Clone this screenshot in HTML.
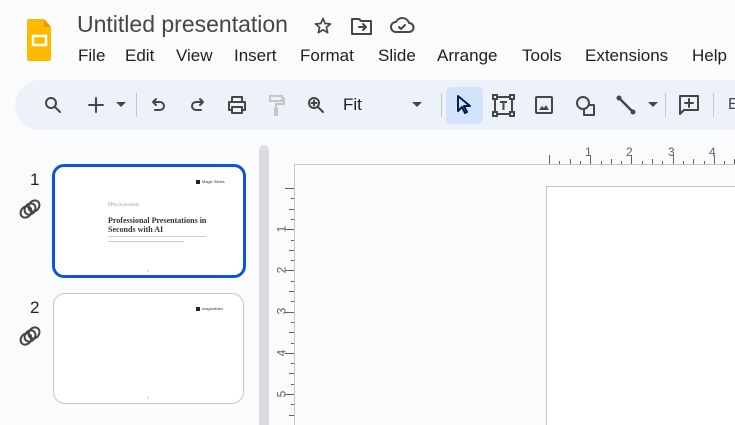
<!DOCTYPE html>
<html><head><meta charset="utf-8"><style>
*{margin:0;padding:0;box-sizing:border-box}
html{width:735px;height:425px;overflow:hidden}
body{width:735px;height:425px;overflow:hidden;background:#f9fbfd;font-family:"Liberation Sans",sans-serif;position:relative;color:#1f1f1f}
.a{position:absolute}
.menu span{position:absolute;top:46px;font-size:17px;color:#1f1f1f}
svg{position:absolute;overflow:visible}
.ic{fill:none;stroke:#444746;stroke-width:2;stroke-linecap:round;stroke-linejoin:round}
.tick{background:#5f6368;position:absolute}
.rn{position:absolute;font-size:12px;color:#5f6368}
.vr{position:absolute;font-size:12px;color:#5f6368;transform:rotate(-90deg)}
</style></head><body>
<svg style="left:27px;top:19px" width="24" height="42" viewBox="0 0 24 42">
<path d="M2 0h15l7 8v32a2 2 0 0 1-2 2H2a2 2 0 0 1-2-2V2a2 2 0 0 1 2-2z" fill="#ffba00"/>
<path d="M17 0v8h7z" fill="#f29900"/>
<rect x="6" y="17" width="13" height="9" fill="none" stroke="#fff" stroke-width="2.5"/>
</svg>
<div class="a" style="left:77px;top:11px;font-size:23px;color:#444746">Untitled presentation</div>
<svg style="left:313px;top:16px" width="20" height="20" viewBox="0 0 24 24"><path class="ic" d="M12 3l2.6 6 6.4.5-4.9 4.2 1.5 6.3L12 16.6 6.4 20l1.5-6.3L3 9.5l6.4-.5z"/></svg>
<svg style="left:351px;top:17px" width="22" height="18" viewBox="0 0 22 18"><path class="ic" d="M1 2h7l2 2h10v13H1z"/><path class="ic" d="M8 10h7M12 7l3 3-3 3"/></svg>
<svg style="left:390px;top:16px" width="24" height="18" viewBox="0 0 24 18"><path class="ic" d="M6 16a5 5 0 0 1 0-10 7 7 0 0 1 13 1 4.5 4.5 0 0 1 0 9z"/><path class="ic" d="M9 11l2 2 4-4"/></svg>
<div class="menu">
<span style="left:78px">File</span><span style="left:125px">Edit</span><span style="left:176px">View</span><span style="left:234px">Insert</span><span style="left:300px">Format</span><span style="left:378px">Slide</span><span style="left:437px">Arrange</span><span style="left:522px">Tools</span><span style="left:585px">Extensions</span><span style="left:692px">Help</span>
</div>
<div class="a" style="left:15px;top:80px;width:740px;height:50px;border-radius:25px;background:#edf2fa"></div>
<svg style="left:44px;top:96px" width="18" height="18" viewBox="0 0 18 18"><circle class="ic" cx="7" cy="7" r="5"/><path class="ic" d="M11 11l5 5"/></svg>
<svg style="left:88px;top:97px" width="16" height="16" viewBox="0 0 16 16"><path class="ic" d="M8 1v14M1 8h14"/></svg>
<svg style="left:116px;top:102px" width="10" height="6"><path d="M0 0h10L5 5z" fill="#444746"/></svg>
<div class="a" style="left:136px;top:93px;width:1px;height:24px;background:#c7c7c7"></div>
<svg style="left:150px;top:97px" width="16" height="16" viewBox="0 0 16 16"><path class="ic" d="M4 5h6a4 4 0 0 1 0 8H5M6 2L3 5l3 3"/></svg>
<svg style="left:190px;top:97px" width="16" height="16" viewBox="0 0 16 16"><path class="ic" d="M12 5H6a4 4 0 0 0 0 8h5M10 2l3 3-3 3"/></svg>
<svg style="left:227px;top:95px" width="20" height="20" viewBox="0 0 20 20"><path class="ic" d="M5 6V2h10v4M2 7h16v8h-3M5 15H2V7M5 12h10v6H5z"/></svg>
<svg style="left:268px;top:94px" width="18" height="24" viewBox="0 0 18 24"><path d="M2 2h12v5H2zM14 4h2v6H8v4" fill="none" stroke="#c4c7c5" stroke-width="2"/><rect x="6" y="14" width="4" height="8" fill="#c4c7c5"/></svg>
<svg style="left:307px;top:96px" width="18" height="18" viewBox="0 0 18 18"><circle class="ic" cx="7" cy="7" r="5"/><path class="ic" d="M11 11l5 5M7 4.5v5M4.5 7h5"/></svg>
<div class="a" style="left:343px;top:95px;font-size:17px;color:#1f1f1f">Fit</div>
<svg style="left:412px;top:102px" width="10" height="6"><path d="M0 0h10L5 5z" fill="#444746"/></svg>
<div class="a" style="left:441px;top:93px;width:1px;height:24px;background:#c7c7c7"></div>
<div class="a" style="left:446px;top:87px;width:37px;height:37px;border-radius:5px;background:#d3e3fd"></div>
<svg style="left:456px;top:95px" width="16" height="20" viewBox="0 0 16 20"><path d="M2 1v15l4-4 3 6 2-1-3-6h6z" fill="none" stroke="#041e49" stroke-width="2" stroke-linejoin="round"/></svg>
<svg style="left:492px;top:94px" width="23" height="23" viewBox="0 0 23 23"><g fill="none" stroke="#444746" stroke-width="2"><rect x="1" y="1" width="4" height="4"/><rect x="18" y="1" width="4" height="4"/><rect x="1" y="18" width="4" height="4"/><rect x="18" y="18" width="4" height="4"/><path d="M5 3h13M5 20h13M3 5v13M20 5v13M8 8h7M11.5 8v8"/></g></svg>
<svg style="left:535px;top:96px" width="18" height="18" viewBox="0 0 18 18"><rect class="ic" x="1" y="1" width="16" height="16" rx="1"/><path d="M4 14l3-4 2 2 2-3 3 5z" fill="#444746"/></svg>
<svg style="left:575px;top:95px" width="22" height="22" viewBox="0 0 22 22"><circle class="ic" cx="8" cy="8" r="6"/><path class="ic" d="M14 10h5v10h-10v-5"/></svg>
<svg style="left:616px;top:95px" width="20" height="20" viewBox="0 0 20 20"><path d="M3 3l14 14" stroke="#444746" stroke-width="2.5"/><circle cx="3" cy="3" r="2.5" fill="#444746"/><circle cx="17" cy="17" r="2.5" fill="#444746"/></svg>
<svg style="left:648px;top:102px" width="10" height="6"><path d="M0 0h10L5 5z" fill="#444746"/></svg>
<div class="a" style="left:665px;top:93px;width:1px;height:24px;background:#c7c7c7"></div>
<svg style="left:679px;top:95px" width="20" height="20" viewBox="0 0 20 20"><path class="ic" d="M1 1h18v14H5l-4 4zM10 4v8M6 8h8"/></svg>
<div class="a" style="left:713px;top:93px;width:1px;height:24px;background:#c7c7c7"></div>
<div class="a" style="left:728px;top:96px;font-size:16px;color:#444746">E</div>
<div class="a" style="left:30px;top:170px;font-size:17px;color:#1f1f1f">1</div>
<div class="a" style="left:30px;top:298px;font-size:17px;color:#1f1f1f">2</div>
<svg style="left:18px;top:198px" width="24" height="22" viewBox="0 0 24 22"><g fill="none" stroke="#444746" stroke-width="2"><ellipse cx="8" cy="14" rx="5" ry="6" transform="rotate(40 8 14)"/><ellipse cx="12" cy="11" rx="5" ry="6" transform="rotate(40 12 11)"/><ellipse cx="16" cy="8" rx="5" ry="6" transform="rotate(40 16 8)"/></g></svg>
<svg style="left:18px;top:325px" width="24" height="22" viewBox="0 0 24 22"><g fill="none" stroke="#444746" stroke-width="2"><ellipse cx="8" cy="14" rx="5" ry="6" transform="rotate(40 8 14)"/><ellipse cx="12" cy="11" rx="5" ry="6" transform="rotate(40 12 11)"/><ellipse cx="16" cy="8" rx="5" ry="6" transform="rotate(40 16 8)"/></g></svg>
<div class="a" style="left:52px;top:164px;width:194px;height:114px;border:3px solid #0b57d0;border-radius:12px;background:#fff"></div>
<div class="a" style="left:196px;top:180px;width:4px;height:4px;background:#222"></div>
<div class="a" style="left:202px;top:179px;font-size:4px;color:#333">Magic Slides</div>
<div class="a" style="left:108px;top:203px;font-size:5px;color:#999;font-family:'Liberation Serif',serif">PPts in seconds</div>
<div class="a" style="left:108px;top:216px;font-size:8px;font-weight:bold;color:#333;font-family:'Liberation Serif',serif;line-height:9px">Professional Presentations in<br>Seconds with AI</div>
<div class="a" style="left:108px;top:236px;width:98px;height:1px;background:#ccc"></div>
<div class="a" style="left:108px;top:241px;width:76px;height:1px;background:#ccc"></div>
<div class="a" style="left:147px;top:268px;font-size:4px;color:#aaa">2</div>
<div class="a" style="left:53px;top:293px;width:191px;height:111px;border:1px solid #c4c7c5;border-radius:12px;background:#fff"></div>
<div class="a" style="left:196px;top:307px;width:4px;height:4px;background:#222"></div>
<div class="a" style="left:202px;top:306px;font-size:4px;color:#333">magicslides</div>
<div class="a" style="left:147px;top:395px;font-size:4px;color:#aaa">3</div>
<div class="a" style="left:259px;top:145px;width:10px;height:290px;border-radius:5px 5px 0 0;background:#dadce0"></div>
<div class="a" style="left:294px;top:164px;width:450px;height:1px;background:#c4c7c5"></div>
<div class="a" style="left:294px;top:164px;width:1px;height:270px;background:#c4c7c5"></div>
<div class="a" style="left:546px;top:186px;width:200px;height:250px;background:#fff;border:1px solid #c4c7c5;border-right:0;border-bottom:0"></div>
<div id="rh"></div>
<script>
var h='';
for(var i=0;i<24;i++){var x=549+i*10.3;var big=(i%4==0);var mid=(i%4==2);var len=big?9:(mid?5:3);h+='<div class="tick" style="left:'+Math.round(x)+'px;top:'+(164-len)+'px;width:1px;height:'+len+'px"></div>';}
for(var j=0;j<23;j++){var y=188+j*10.3;var b=(j%4==0);var m=(j%4==2);var l=b?9:(m?5:3);h+='<div class="tick" style="left:'+(294-l)+'px;top:'+Math.round(y)+'px;width:'+l+'px;height:1px"></div>';}
document.getElementById('rh').innerHTML=h;
</script>
<div class="rn" style="left:585px;top:145px">1</div>
<div class="rn" style="left:626px;top:145px">2</div>
<div class="rn" style="left:668px;top:145px">3</div>
<div class="rn" style="left:709px;top:145px">4</div>
<div class="vr" style="left:278px;top:222px">1</div>
<div class="vr" style="left:278px;top:263px">2</div>
<div class="vr" style="left:278px;top:304px">3</div>
<div class="vr" style="left:278px;top:346px">4</div>
<div class="vr" style="left:278px;top:387px">5</div>
</body></html>
